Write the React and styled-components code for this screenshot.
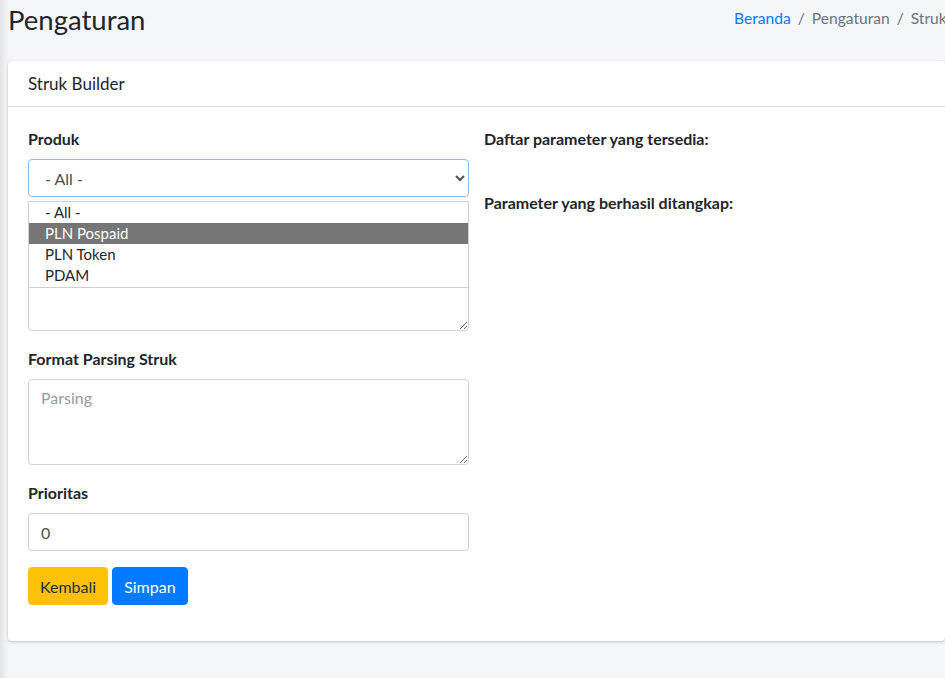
import React from "react";
import styled, { createGlobalStyle } from "styled-components";

const GlobalStyle = createGlobalStyle`
  html, body {
    margin: 0;
    padding: 0;
    background: #f4f6f9;
    overflow: hidden;
  }
  body {
    font-family: "Lato", "Open Sans", sans-serif;
    font-size: 16px;
    color: #212529;
  }
  * { box-sizing: border-box; }
`;

const options = ["- All -", "PLN Pospaid", "PLN Token", "PDAM"];

export default function App() {
  return (
    <>
      <GlobalStyle />
      <Page>
        <Header>
          <Title>Pengaturan</Title>
          <Breadcrumb>
            <Crumb href="#">Beranda</Crumb>
            <Sep>/</Sep>
            <CrumbText>Pengaturan</CrumbText>
            <Sep>/</Sep>
            <CrumbText>Struk Builder</CrumbText>
          </Breadcrumb>
        </Header>

        <Card>
          <CardHeader>
            <CardTitle>Struk Builder</CardTitle>
          </CardHeader>
          <CardBody>
            <Column>
              <FormGroup>
                <Label>Produk</Label>
                <SelectWrap>
                  <Select defaultValue="all">
                    <option value="all">- All -</option>
                    <option value="pospaid">PLN Pospaid</option>
                    <option value="token">PLN Token</option>
                    <option value="pdam">PDAM</option>
                  </Select>
                  <Popup>
                    {options.map((o, i) => (
                      <PopupItem key={o} active={i === 1}>{o}</PopupItem>
                    ))}
                  </Popup>
                </SelectWrap>
              </FormGroup>
              <FormGroup>
                {/* label sits under the open dropdown */}
                <Label>&nbsp;</Label>
                <TextArea rows={3} />
              </FormGroup>
              <FormGroup>
                <Label>Format Parsing Struk</Label>
                <TextArea rows={3} placeholder="Parsing" />
              </FormGroup>
              <FormGroup>
                <Label>Prioritas</Label>
                <Input defaultValue="0" />
              </FormGroup>
              <Buttons>
                <Button variant="warning">Kembali</Button>
                <Button variant="primary">Simpan</Button>
              </Buttons>
            </Column>
            <Column>
              <ParamBlock>
                <Label>Daftar parameter yang tersedia:</Label>
              </ParamBlock>
              <ParamBlock>
                <Label>Parameter yang berhasil ditangkap:</Label>
              </ParamBlock>
            </Column>
          </CardBody>
        </Card>
      </Page>
    </>
  );
}

const Page = styled.div`
  width: 953px;
  min-height: 678px;
  padding: 0 0 0 8px;
  background: linear-gradient(to right, #e2e3e6 0px, #eef0f3 5px, #f4f6f9 9px, #f4f6f9 100%);
`;

const Header = styled.div`
  display: flex;
  align-items: flex-start;
  padding: 3px 0 0 0;
  height: 61px;
`;

const Title = styled.h1`
  flex: 1;
  margin: 0;
  font-size: 27.5px;
  font-weight: 400;
  line-height: 34px;
  color: #212529;
`;

const Breadcrumb = styled.div`
  flex: 0 0 219px;
  min-width: 0;
  display: flex;
  white-space: nowrap;
  font-size: 15.6px;
  line-height: 24px;
  padding-top: 3px;
  color: #6c757d;
`;

const Crumb = styled.a`
  color: #007bff;
  text-decoration: none;
`;

const CrumbText = styled.span`
  color: #6c757d;
`;

const Sep = styled.span`
  padding: 0 7px;
  color: #6c757d;
`;

const Card = styled.div`
  width: 937px;
  background: #fff;
  border-radius: 4px;
  box-shadow: 0 0 1px rgba(0, 0, 0, 0.125), 0 1px 3px rgba(0, 0, 0, 0.2);
`;

const CardHeader = styled.div`
  padding: 12px 20px;
  border-bottom: 1px solid rgba(0, 0, 0, 0.125);
`;

const CardTitle = styled.h3`
  margin: 0;
  font-size: 17px;
  font-weight: 400;
  line-height: 21px;
`;

const CardBody = styled.div`
  display: grid;
  grid-template-columns: 441px 1fr;
  column-gap: 15px;
  padding: 20px 20px 36px;
`;

const Column = styled.div`
  display: flex;
  flex-direction: column;
`;

const FormGroup = styled.div`
  margin-bottom: 16px;
`;

const Label = styled.label`
  display: block;
  margin-bottom: 8px;
  font-weight: 700;
  line-height: 24px;
  color: #212529;
`;

const SelectWrap = styled.div`
  position: relative;
`;

const Select = styled.select`
  display: block;
  width: 100%;
  height: 38px;
  padding: 6px 12px;
  font-family: inherit;
  font-size: 16px;
  color: #495057;
  background: #fff;
  border: 1px solid #80bdff;
  border-radius: 4px;
  outline: none;
`;

const Popup = styled.div`
  position: absolute;
  top: 42px;
  left: 0;
  right: 0;
  z-index: 10;
  background: #fff;
  border: 1px solid #d0d0d0;
  padding-bottom: 1px;
`;

const PopupItem = styled.div`
  height: 21px;
  line-height: 21px;
  padding-left: 16px;
  font-size: 15px;
  color: ${(p) => (p.active ? "#fff" : "#212529")};
  background: ${(p) => (p.active ? "#767676" : "transparent")};
`;

const TextArea = styled.textarea`
  display: block;
  width: 100%;
  height: 86px;
  padding: 6px 12px;
  font-family: inherit;
  font-size: 16px;
  line-height: 24px;
  color: #495057;
  border: 1px solid #ced4da;
  border-radius: 4px;
  resize: vertical;

  &::placeholder {
    color: #939ba2;
  }
`;

const Input = styled.input`
  display: block;
  width: 100%;
  height: 38px;
  padding: 6px 12px;
  font-family: inherit;
  font-size: 16px;
  color: #495057;
  border: 1px solid #ced4da;
  border-radius: 4px;
`;

const Buttons = styled.div`
  display: flex;
  gap: 4px;
`;

const Button = styled.button`
  height: 38px;
  padding: 6px 11px;
  font-family: inherit;
  font-size: 16px;
  border: 1px solid ${(p) => (p.variant === "warning" ? "#ffc107" : "#007bff")};
  border-radius: 4px;
  background: ${(p) => (p.variant === "warning" ? "#ffc107" : "#007bff")};
  color: ${(p) => (p.variant === "warning" ? "#1f2d3d" : "#fff")};
  cursor: pointer;
`;

const ParamBlock = styled.div`
  margin-bottom: 32px;
`;
